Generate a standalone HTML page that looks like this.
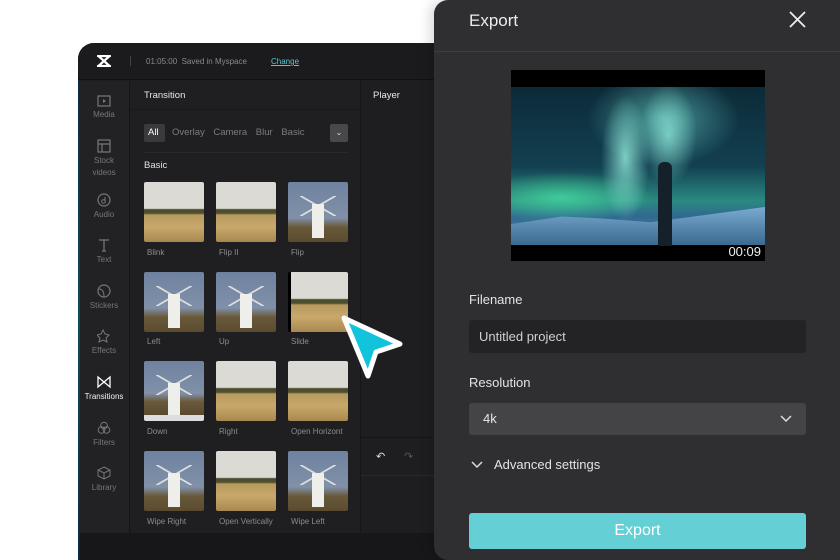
<!DOCTYPE html>
<html><head><meta charset="utf-8"><style>
*{margin:0;padding:0;box-sizing:border-box}
body{width:840px;height:560px;overflow:hidden;background:#fff;font-family:"Liberation Sans",sans-serif;position:relative}
.ab{position:absolute}
.ed{left:78px;top:43px;width:380px;height:517px;background:#1e1e21;border-top-left-radius:16px;overflow:hidden}
.txt{color:#8a8a8e;font-size:8px}
.side .it{position:absolute;left:0;width:52px;text-align:center;color:#77777b;font-size:8px;line-height:12px}
.side svg{display:block;margin:0 auto 2px}
.th{position:absolute;width:60px;height:60px;border-radius:2px;overflow:hidden}
.f{background:linear-gradient(#dcdad4 0,#dcdad4 44%,#4a4a30 46%,#50502e 52%,#b89a5e 55%,#c8a86a 75%,#a88850 100%)}
.w{background:linear-gradient(#6e82a0 0,#8090a8 60%,#6a5a3a 75%,#5a4a30 100%)}
.w::after{content:"";position:absolute;left:24px;top:22px;width:12px;height:34px;background:#eeeeea}
.w::before{content:"";position:absolute;left:12px;top:14px;width:36px;height:20px;background:linear-gradient(30deg,transparent 47%,#ddd 48%,#ddd 52%,transparent 53%),linear-gradient(-30deg,transparent 47%,#ddd 48%,#ddd 52%,transparent 53%)}
.lb{position:absolute;font-size:8px;color:#8c8c90}
.ex{left:434px;top:0;width:406px;height:560px;background:#2f2f32;border-top-left-radius:14px;border-bottom-left-radius:14px;box-shadow:-4px 0 12px rgba(0,0,0,.15)}
</style></head><body>
<div class="ab ed">
  <div class="ab" style="left:0;top:0;width:380px;height:37px;background:#1b1b1d;border-bottom:1px solid #111"></div>
  <svg class="ab" style="left:19px;top:12px" width="14" height="12"><path d="M1 1h12M1 11h12M2 1.5l10 9M12 1.5l-10 9" stroke="#fff" stroke-width="2.2" fill="none" stroke-linecap="round"/></svg>
  <div class="ab" style="left:52px;top:13px;width:1px;height:10px;background:#444"></div>
  <div class="ab txt" style="left:68px;top:14px">01:05:00&nbsp; Saved in Myspace</div>
  <div class="ab" style="left:193px;top:14px;font-size:8px;color:#5cc6cf;text-decoration:underline">Change</div>
  <div class="ab side" style="left:0;top:38px;width:52px;height:452px;background:#222225;border-right:1px solid #151517">
    <div class="it" style="top:14px"><svg width="14" height="12"><rect x="1" y="1" width="12" height="10" fill="none" stroke="#77777b" stroke-width="1.2"/><path d="M6 4l3 2-3 2z" fill="#77777b"/></svg>Media</div>
    <div class="it" style="top:58px"><svg width="14" height="14"><rect x="1" y="1" width="12" height="12" fill="none" stroke="#77777b" stroke-width="1.2"/><path d="M1 5h12M5 5v8" stroke="#77777b" stroke-width="1.2"/></svg>Stock<br>videos</div>
    <div class="it" style="top:112px"><svg width="14" height="14"><circle cx="7" cy="7" r="6" fill="none" stroke="#77777b" stroke-width="1.2"/><circle cx="6.5" cy="8.5" r="1.8" fill="none" stroke="#77777b"/><path d="M8 8V4" stroke="#77777b"/></svg>Audio</div>
    <div class="it" style="top:157px"><svg width="14" height="14"><path d="M2 2h10M7 2v11M5 13h4" stroke="#77777b" stroke-width="1.2" fill="none"/></svg>Text</div>
    <div class="it" style="top:203px"><svg width="14" height="14"><circle cx="7" cy="7" r="6" fill="none" stroke="#77777b" stroke-width="1.2"/><path d="M2 5c3 0 5 2 5 8" stroke="#77777b" fill="none"/></svg>Stickers</div>
    <div class="it" style="top:248px"><svg width="14" height="14"><path d="M6 1l2 4 4 1-3 3 1 4-4-2-4 2 1-4-3-3 4-1z" fill="none" stroke="#77777b"/></svg>Effects</div>
    <div class="it" style="top:294px;color:#f2f2f2"><svg width="14" height="14"><path d="M1 2l12 10V2L1 12z" fill="none" stroke="#fff" stroke-width="1.3"/></svg>Transitions</div>
    <div class="it" style="top:340px"><svg width="14" height="14"><circle cx="7" cy="4.5" r="3.3" fill="none" stroke="#77777b"/><circle cx="4.5" cy="9" r="3.3" fill="none" stroke="#77777b"/><circle cx="9.5" cy="9" r="3.3" fill="none" stroke="#77777b"/></svg>Filters</div>
    <div class="it" style="top:385px"><svg width="14" height="14"><path d="M7 1l6 3v6l-6 3-6-3V4zM1 4l6 3 6-3M7 7v6" fill="none" stroke="#77777b"/></svg>Library</div>
  </div>
  <div class="ab" style="left:53px;top:38px;width:229px;height:452px;background:#1f1f22"></div>
  <div class="ab" style="left:66px;top:47px;font-size:9.5px;color:#e8e8e8">Transition</div>
  <div class="ab" style="left:53px;top:66px;width:229px;height:1px;background:#18181a"></div>
  <div class="ab" style="left:66px;top:81px;width:21px;height:18px;background:#3a3a3d;border-radius:2px"></div>
  <div class="ab" style="left:70px;top:82px;font-size:9.5px;color:#fff;line-height:16px">All</div>
  <div class="ab" style="left:94px;top:82px;font-size:9.5px;color:#7c7c80;line-height:16px;word-spacing:6px">Overlay Camera Blur Basic</div>
  <div class="ab" style="left:252px;top:81px;width:18px;height:18px;background:#48484c;border-radius:2px;color:#ddd;font-size:8px;text-align:center;line-height:18px">⌄</div>
  <div class="ab" style="left:66px;top:109px;width:204px;height:1px;background:#28282b"></div>
  <div class="ab" style="left:66px;top:117px;font-size:9.5px;color:#e0e0e0">Basic</div>
  <div class="th f" style="left:66px;top:139px"></div><div class="th f" style="left:138px;top:139px"></div><div class="th w" style="left:210px;top:139px"></div>
  <div class="lb" style="left:69px;top:205px">Blink</div><div class="lb" style="left:141px;top:205px">Flip II</div><div class="lb" style="left:213px;top:205px">Flip</div>
  <div class="th w" style="left:66px;top:229px"></div><div class="th w" style="left:138px;top:229px"></div><div class="th f" style="left:210px;top:229px;border-left:3px solid #000"></div>
  <div class="lb" style="left:69px;top:294px">Left</div><div class="lb" style="left:141px;top:294px">Up</div><div class="lb" style="left:213px;top:294px">Slide</div>
  <div class="th w" style="left:66px;top:318px;border-bottom:6px solid #ddd"></div><div class="th f" style="left:138px;top:318px"></div><div class="th f" style="left:210px;top:318px"></div>
  <div class="lb" style="left:69px;top:384px">Down</div><div class="lb" style="left:141px;top:384px">Right</div><div class="lb" style="left:213px;top:384px">Open Horizont</div>
  <div class="th w" style="left:66px;top:408px"></div><div class="th f" style="left:138px;top:408px"></div><div class="th w" style="left:210px;top:408px"></div>
  <div class="lb" style="left:69px;top:474px">Wipe Right</div><div class="lb" style="left:141px;top:474px">Open Vertically</div><div class="lb" style="left:213px;top:474px">Wipe Left</div>
  <div class="ab" style="left:282px;top:38px;width:1px;height:452px;background:#151517"></div>
  <div class="ab" style="left:295px;top:47px;font-size:9.5px;color:#e8e8e8">Player</div>
  <div class="ab" style="left:283px;top:394px;width:100px;height:1px;background:#151517"></div>
  <div class="ab" style="left:298px;top:407px;color:#ddd;font-size:11px">↶</div>
  <div class="ab" style="left:326px;top:407px;color:#555;font-size:11px">↷</div>
  <div class="ab" style="left:283px;top:432px;width:100px;height:1px;background:#2a2a2d"></div>
  <div class="ab" style="left:0;top:490px;width:380px;height:27px;background:#171719"></div>
  <div class="ab" style="left:0;top:38px;width:2px;height:479px;background:linear-gradient(#0a2a40,#0c4a60,#0a2a40)"></div>
</div>
<svg class="ab" style="left:336px;top:312px" width="72" height="72"><path d="M8 6L64 32 40 40 32 64z" fill="#12c3dc" stroke="#fff" stroke-width="5" stroke-linejoin="round"/></svg>
<div class="ab ex">
  <div class="ab" style="left:35px;top:11px;font-size:17px;color:#ececec">Export</div>
  <svg class="ab" style="left:355px;top:11px" width="17" height="17"><path d="M1 1l15 15M16 1L1 16" stroke="#eee" stroke-width="1.8"/></svg>
  <div class="ab" style="left:0;top:51px;width:406px;height:1px;background:#3d3d40"></div>
  <div class="ab" style="left:77px;top:70px;width:254px;height:191px;background:#000;overflow:hidden">
    <div class="ab" style="left:0;top:17px;width:254px;height:158px;background:radial-gradient(ellipse 12% 50% at 45% 45%,rgba(150,240,225,.8) 0,transparent 80%),radial-gradient(ellipse 14% 40% at 62% 30%,rgba(150,240,225,.7) 0,transparent 80%),radial-gradient(ellipse 40% 40% at 60% 20%,rgba(110,220,210,.6) 0,transparent 75%),radial-gradient(ellipse 45% 20% at 20% 70%,rgba(70,220,160,.8) 0,transparent 80%),linear-gradient(#0c2a38 0,#124050 50%,#2a8a80 72%,#306890 82%,#5a8ab0 100%)"></div>
    <div class="ab" style="left:0;top:137px;width:254px;height:38px;background:linear-gradient(#7aaad0,#3a6a90);clip-path:polygon(0 45%,20% 25%,35% 30%,55% 40%,100% 0,100% 100%,0 100%)"></div>
    <div class="ab" style="left:147px;top:92px;width:14px;height:84px;background:#14202a;border-radius:6px 6px 2px 2px"></div>
    <div class="ab" style="right:4px;top:174px;font-size:13px;color:#eee">00:09</div>
  </div>
  <div class="ab" style="left:35px;top:292px;font-size:13px;color:#e4e4e4">Filename</div>
  <div class="ab" style="left:35px;top:320px;width:337px;height:33px;background:#232325;border-radius:3px;font-size:13px;color:#d0d0d0;padding:9px 10px">Untitled project</div>
  <div class="ab" style="left:35px;top:375px;font-size:13px;color:#e4e4e4">Resolution</div>
  <div class="ab" style="left:35px;top:403px;width:337px;height:32px;background:#444447;border-radius:3px;font-size:13px;color:#e8e8e8;padding:8px 14px">4k</div>
  <svg class="ab" style="left:346px;top:415px" width="12" height="8"><path d="M1 1l5 5 5-5" stroke="#ddd" stroke-width="1.5" fill="none"/></svg>
  <svg class="ab" style="left:37px;top:461px" width="12" height="8"><path d="M1 1l5 5 5-5" stroke="#ddd" stroke-width="1.5" fill="none"/></svg>
  <div class="ab" style="left:60px;top:457px;font-size:13px;color:#e4e4e4">Advanced settings</div>
  <div class="ab" style="left:35px;top:513px;width:337px;height:36px;background:#64cfd5;border-radius:3px;font-size:16px;color:#fff;text-align:center;line-height:36px">Export</div>
</div>
</body></html>
